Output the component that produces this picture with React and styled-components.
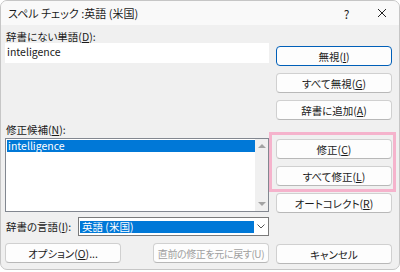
import styled, { createGlobalStyle } from "styled-components";

const GlobalStyle = createGlobalStyle`
  html, body {
    margin: 0;
    padding: 0;
    background: #ffffff;
  }
  body {
    font-family: "Noto Sans CJK JP", "Noto Sans", sans-serif;
    font-feature-settings: "palt";
    color: #1b1b1b;
  }
`;

const Window = styled.div`
  box-sizing: border-box;
  width: 400px;
  height: 270px;
  border: 1px solid #c6c6c6;
  border-radius: 7px;
  background: #f0f0f0;
  overflow: hidden;
  display: flex;
  flex-direction: column;
`;

const TitleBar = styled.div`
  height: 24px;
  background: #f9f9f9;
  display: flex;
  align-items: center;
  padding-left: 7px;
  font-size: 11px;
  color: #1b1b1b;
`;

const Title = styled.div`
  flex: 1;
`;

const TitleButton = styled.div`
  width: 35px;
  display: flex;
  justify-content: center;
  align-items: center;
  font-size: 12px;
  color: #222;
`;

const Body = styled.div`
  display: flex;
  gap: 7px;
  padding: 0 6px 0 4px;
`;

const LeftCol = styled.div`
  width: 264px;
  display: flex;
  flex-direction: column;
`;

const RightCol = styled.div`
  width: 116px;
  display: flex;
  flex-direction: column;
`;

const Label = styled.div`
  height: 13px;
  line-height: 13px;
  font-size: 10.5px;
  margin-top: ${(p) => p.$top || 0}px;
  padding-left: 1px;
  white-space: nowrap;
`;

const TextBox = styled.div`
  height: 20px;
  background: #ffffff;
  font-size: 10.5px;
  line-height: 17px;
  padding-left: 2px;
`;

const ListBox = styled.div`
  margin-top: 2px;
  height: 74px;
  box-sizing: border-box;
  border: 1px solid #828790;
  background: #ffffff;
  display: flex;
`;

const ListItems = styled.div`
  flex: 1;
  padding: 1px 0 0 1px;
`;

const ListItem = styled.div`
  height: 12px;
  line-height: 12px;
  font-size: 10.5px;
  padding-left: 1px;
  background: ${(p) => (p.$selected ? "#0078d7" : "transparent")};
  color: ${(p) => (p.$selected ? "#ffffff" : "#1b1b1b")};
`;

const ScrollBar = styled.div`
  width: 13px;
  background: #f0f0f0;
  display: flex;
  flex-direction: column;
  justify-content: space-between;
  align-items: center;
  padding: 5px 0;
  box-sizing: border-box;
`;

const Arrow = styled.div`
  width: 0;
  height: 0;
  border-left: 4px solid transparent;
  border-right: 4px solid transparent;
  ${(p) =>
    p.$down
      ? "border-top: 4px solid #a3a3a3;"
      : "border-bottom: 4px solid #a3a3a3;"}
`;

const LangRow = styled.div`
  margin-top: 5px;
  height: 19px;
  display: flex;
  align-items: center;
`;

const LangLabel = styled.div`
  width: 72px;
  font-size: 10.5px;
  padding-left: 1px;
  white-space: nowrap;
`;

const Combo = styled.div`
  flex: 1;
  height: 19px;
  box-sizing: border-box;
  border: 1px solid #7a7a7a;
  background: #ffffff;
  display: flex;
  align-items: center;
  padding-left: 1px;
`;

const ComboValue = styled.div`
  flex: 1;
  height: 12px;
  line-height: 12px;
  background: #0078d7;
  color: #ffffff;
  font-size: 10.5px;
  padding-left: 2px;
`;

const ComboArrow = styled.div`
  width: 14px;
  display: flex;
  justify-content: center;
  align-items: center;
`;

const BottomRow = styled.div`
  margin-top: 7px;
  display: flex;
  justify-content: space-between;
`;

const Button = styled.div`
  box-sizing: border-box;
  width: ${(p) => p.$width || 116}px;
  height: 20px;
  margin-top: ${(p) => p.$top || 0}px;
  border: 1px solid ${(p) => (p.$default ? "#005fb8" : "#d0d0d0")};
  border-bottom-color: ${(p) => (p.$default ? "#005fb8" : "#b8b8b8")};
  border-radius: 4px;
  background: #fdfdfd;
  display: flex;
  justify-content: center;
  align-items: center;
  font-size: ${(p) => (p.$disabled ? 10 : 10.5)}px;
  letter-spacing: ${(p) => (p.$disabled ? "-0.4px" : "normal")};
  color: ${(p) => (p.$disabled ? "#a0a0a0" : "#1b1b1b")};
  white-space: nowrap;
  overflow: hidden;
`;

const Key = styled.span`
  text-decoration: underline;
  text-underline-offset: 1px;
`;

const Highlight = styled.div`
  position: relative;
  margin-top: 19px;
  &::after {
    content: "";
    position: absolute;
    top: -7px;
    left: -7px;
    right: -4px;
    bottom: -6px;
    border: 3px solid #f5b3cc;
    pointer-events: none;
  }
`;

export default function App() {
  return (
    <>
      <GlobalStyle />
      <Window>
        <TitleBar>
          <Title>スペル チェック :英語 (米国)</Title>
          <TitleButton>?</TitleButton>
          <TitleButton>
            <svg width="10" height="10" viewBox="0 0 10 10">
              <path d="M1 1 L9 9 M9 1 L1 9" stroke="#222" strokeWidth="1" />
            </svg>
          </TitleButton>
        </TitleBar>
        <Body>
          <LeftCol>
            <Label $top={5}>
              辞書にない単語(<Key>D</Key>):
            </Label>
            <TextBox>inteligence</TextBox>
            <Label $top={60}>
              修正候補(<Key>N</Key>):
            </Label>
            <ListBox>
              <ListItems>
                <ListItem $selected>intelligence</ListItem>
              </ListItems>
              <ScrollBar>
                <Arrow />
                <Arrow $down />
              </ScrollBar>
            </ListBox>
            <LangRow>
              <LangLabel>
                辞書の言語(<Key>I</Key>):
              </LangLabel>
              <Combo>
                <ComboValue>英語 (米国)</ComboValue>
                <ComboArrow>
                  <svg width="8" height="5" viewBox="0 0 8 5">
                    <path d="M0.5 0.5 L4 4 L7.5 0.5" fill="none" stroke="#555" strokeWidth="1" />
                  </svg>
                </ComboArrow>
              </Combo>
            </LangRow>
            <BottomRow>
              <Button>
                オプション(<Key>O</Key>)...
              </Button>
              <Button $disabled>直前の修正を元に戻す(U)</Button>
            </BottomRow>
          </LeftCol>
          <RightCol>
            <Button $top={21} $default>
              無視(<Key>I</Key>)
            </Button>
            <Button $top={7}>
              すべて無視(<Key>G</Key>)
            </Button>
            <Button $top={7}>
              辞書に追加(<Key>A</Key>)
            </Button>
            <Highlight>
              <Button>
                修正(<Key>C</Key>)
              </Button>
              <Button $top={7}>
                すべて修正(<Key>L</Key>)
              </Button>
            </Highlight>
            <Button $top={7}>
              オートコレクト(<Key>R</Key>)
            </Button>
            <Button $top={31}>キャンセル</Button>
          </RightCol>
        </Body>
      </Window>
    </>
  );
}
